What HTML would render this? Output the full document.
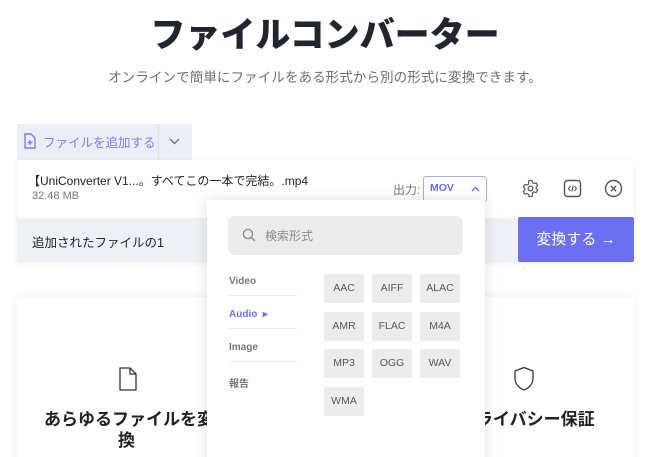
<!DOCTYPE html>
<html><head><meta charset="utf-8"><style>
*{margin:0;padding:0;box-sizing:border-box}
html,body{width:650px;height:457px;overflow:hidden}
body{background:#fff;font-family:"Liberation Sans","Noto Sans CJK JP",sans-serif;position:relative;color:#222}
.a{position:absolute}
h1{position:absolute;left:0;width:650px;top:14px;text-align:center;font-size:35px;font-weight:900;color:#1f2630;line-height:44px}
.sub{left:0;width:650px;top:66px;text-align:center;font-size:13.6px;color:#6b6f76}
.tab{left:17px;top:124px;width:175px;height:37px;background:#eceef5}
.card{left:17px;top:160px;width:617px;height:102px;background:#fff;box-shadow:0 1px 4px rgba(0,0,0,.08)}
.row2{left:17px;top:218px;width:617px;height:44px;background:#eef0f6}
.btn{left:518px;top:217px;width:116px;height:45px;background:#6b70f0;color:#fff;font-size:15px;line-height:45px;text-align:center;border-radius:2px}
.big{left:17px;top:297px;width:617px;height:170px;background:#fff;box-shadow:0 0 10px rgba(0,0,0,.07);border-radius:4px}
.dd{left:207px;top:200px;width:278px;height:270px;background:#fff;box-shadow:0 0 14px rgba(0,0,0,.12)}
.search{left:228px;top:216px;width:235px;height:39px;background:#ececec;border-radius:7px}
.m{left:229px;font-size:10px;font-weight:bold;color:#777}
.ln{left:229px;width:68px;height:1px;background:#ececec}
.f{width:40px;height:29px;background:#ececec;border-radius:2px;font-size:10.5px;color:#555;text-align:center;line-height:29px}
.ft{font-size:17px;font-weight:bold;color:#222}
</style></head><body>
<h1>ファイルコンバーター</h1>
<div class="a sub">オンラインで簡単にファイルをある形式から別の形式に変換できます。</div>
<div class="a tab"></div>
<div class="a" style="left:158px;top:124px;width:1px;height:37px;background:#dfe1ea"></div>
<svg class="a" style="left:23px;top:133px" width="14" height="16" viewBox="0 0 14 16"><path d="M2 1h6l4 4v10H2z" fill="none" stroke="#7a7ee8" stroke-width="1.4"/><path d="M7 7v5M4.5 9.5h5" stroke="#7a7ee8" stroke-width="1.4"/></svg>
<div class="a" style="left:43px;top:132px;font-size:12.5px;color:#7a7ee8">ファイルを追加する</div>
<svg class="a" style="left:169px;top:138px" width="11" height="7"><path d="M1 1l4.5 4.5L10 1" fill="none" stroke="#777" stroke-width="1.4"/></svg>
<div class="a card"></div>
<div class="a row2"></div>
<div class="a" style="left:28px;top:172px;font-size:12px;color:#222">【UniConverter V1...。すべてこの一本で完結。.mp4</div>
<div class="a" style="left:32px;top:190px;font-size:11px;color:#777">32.48 MB</div>
<div class="a" style="left:393px;top:181px;font-size:12px;color:#777">出力:</div>
<div class="a" style="left:423px;top:176px;width:64px;height:26px;border:1px solid #a9acef;border-radius:3px;background:#fff"></div>
<div class="a" style="left:430px;top:182px;font-size:10.5px;font-weight:bold;color:#6b70f0">MOV</div>
<svg class="a" style="left:471px;top:186px" width="9" height="6"><path d="M1 5l3.5-3.5L8 5" fill="none" stroke="#6b70f0" stroke-width="1.3"/></svg>
<svg class="a" style="left:521px;top:179px" width="19" height="19" viewBox="0 0 24 24"><circle cx="12" cy="12" r="3" fill="none" stroke="#555" stroke-width="1.6"/><path d="M10 2h4l.6 2.6 2 1.1 2.5-.9 2 3.4-2 1.8v2l2 1.8-2 3.4-2.5-.9-2 1.1L14 22h-4l-.6-2.6-2-1.1-2.5.9-2-3.4 2-1.8v-2l-2-1.8 2-3.4 2.5.9 2-1.1z" fill="none" stroke="#555" stroke-width="1.5" stroke-linejoin="round"/></svg>
<svg class="a" style="left:563px;top:179px" width="19" height="19" viewBox="0 0 19 19"><rect x="1.5" y="1.5" width="16" height="16" rx="3" fill="none" stroke="#555" stroke-width="1.4"/><path d="M7.5 7l-2 2.5 2 2.5M11.5 7l2 2.5-2 2.5M10 6.5l-1 6" fill="none" stroke="#555" stroke-width="1.1"/></svg>
<svg class="a" style="left:604px;top:179px" width="19" height="19" viewBox="0 0 19 19"><circle cx="9.5" cy="9.5" r="8" fill="none" stroke="#555" stroke-width="1.4"/><path d="M6.8 6.8l5.4 5.4M12.2 6.8l-5.4 5.4" stroke="#555" stroke-width="1.4"/></svg>
<div class="a" style="left:32px;top:232px;font-size:12.5px;color:#222">追加されたファイルの1</div>
<div class="a btn">変換する &#8594;</div>
<div class="a big"></div>
<svg class="a" style="left:118px;top:367px" width="20" height="24" viewBox="0 0 20 24"><path d="M2 1h10l6 6v16H2z M12 1v6h6" fill="none" stroke="#333" stroke-width="1.3" stroke-linejoin="round"/></svg>
<svg class="a" style="left:513px;top:366px" width="22" height="25" viewBox="0 0 22 25"><path d="M11 1.5L20 5v7c0 6-4 10-9 12C6 22 2 18 2 12V5z" fill="none" stroke="#333" stroke-width="1.3" stroke-linejoin="round"/></svg>
<div class="a ft" style="left:44px;top:405px">あらゆるファイルを変</div>
<div class="a ft" style="left:118px;top:426px">換</div>
<div class="a ft" style="left:476px;top:405px">ライバシー保証</div>
<div class="a dd"></div>
<div class="a search"></div>
<svg class="a" style="left:242px;top:228px" width="14" height="14"><circle cx="6" cy="6" r="4.6" fill="none" stroke="#888" stroke-width="1.3"/><path d="M9.4 9.4l3.4 3.4" stroke="#888" stroke-width="1.3"/></svg>
<div class="a" style="left:265px;top:227px;font-size:12px;color:#888">検索形式</div>
<div class="a m" style="top:276px">Video</div>
<div class="a ln" style="top:295px"></div>
<div class="a m" style="top:309px;color:#6b70f0">Audio &nbsp;&#9656;</div>
<div class="a ln" style="top:328px"></div>
<div class="a m" style="top:342px">Image</div>
<div class="a ln" style="top:361px"></div>
<div class="a m" style="top:375px">報告</div>
<div class="a f" style="left:324px;top:274px">AAC</div>
<div class="a f" style="left:372px;top:274px">AIFF</div>
<div class="a f" style="left:420px;top:274px">ALAC</div>
<div class="a f" style="left:324px;top:312px">AMR</div>
<div class="a f" style="left:372px;top:312px">FLAC</div>
<div class="a f" style="left:420px;top:312px">M4A</div>
<div class="a f" style="left:324px;top:349px">MP3</div>
<div class="a f" style="left:372px;top:349px">OGG</div>
<div class="a f" style="left:420px;top:349px">WAV</div>
<div class="a f" style="left:324px;top:387px">WMA</div>
</body></html>
